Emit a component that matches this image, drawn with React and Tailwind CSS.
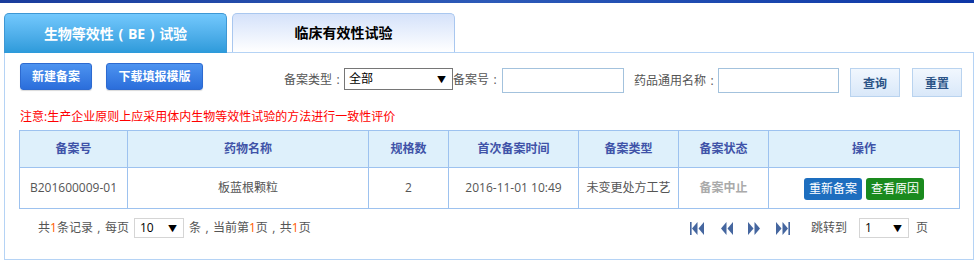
import React from "react";

const F = { fontFamily: '"Open Sans", "Noto Sans CJK SC", sans-serif' };

function P({ c, align = "text-center" }) {
  return <span className={`inline-block w-[1em] ${align}`}>{c}</span>;
}

function Sel({ value, w, h, border, pad = "pl-[4px]" }) {
  return (
    <div className={`flex items-center justify-between bg-white ${w} ${h} ${border} ${pad} pr-[6px] text-[12px] text-black`}>
      <span>{value}</span>
      <span className="text-[9px] leading-none">▼</span>
    </div>
  );
}

function NavIcon({ dir, bar }) {
  return (
    <svg width="15" height="13" viewBox="0 0 15 13" className="block">
      {dir === "left" ? (
        <g fill="#45669f">
          {bar && <rect x="0" y="0" width="1.6" height="13" />}
          <polygon points="7.5,0 2,6.5 7.5,13" />
          <polygon points="14,0 8.5,6.5 14,13" />
        </g>
      ) : (
        <g fill="#45669f">
          <polygon points="1,0 6.5,6.5 1,13" />
          <polygon points="7.5,0 13,6.5 7.5,13" />
          {bar && <rect x="13.4" y="0" width="1.6" height="13" />}
        </g>
      )}
    </svg>
  );
}

export default function App() {
  const cols = [108, 241, 80, 130, 100, 90, 191];
  const heads = ["备案号", "药物名称", "规格数", "首次备案时间", "备案类型", "备案状态", "操作"];
  return (
    <div className="w-[979px] h-[268px] bg-white overflow-hidden text-[12px]" style={F}>
      <div className="h-[3px] w-[974px] bg-gradient-to-r from-[#1a3c9c] via-[#2d5ab8] to-[#0d36a6]" />
      <div className="flex gap-[5px] pl-[4px] mt-[10px] h-[39px] relative z-10">
        <div className="w-[223px] h-[40px] rounded-t-[5px] border border-[#3d97d4] border-b-0 bg-gradient-to-b from-[#72c8fd] to-[#2c9ada] flex items-center justify-center text-white font-bold text-[14px] leading-none whitespace-nowrap">
          <span>生物等效性</span>
          <P c="(" />
          <span>BE</span>
          <P c=")" />
          <span>试验</span>
        </div>
        <div className="w-[223px] h-[39px] rounded-t-[5px] border border-[#a9c7ef] border-b-0 bg-gradient-to-b from-[#d5e2fa] to-white flex items-center justify-center text-black font-bold text-[14px] leading-none">
          临床有效性试验
        </div>
      </div>
      <div className="ml-[4px] w-[970px] h-[208px] border border-[#b5d3f5]">
        <div className="flex items-start pt-[10px] pl-[15px]">
          <div className="w-[72px] h-[27px] rounded-[3px] border border-[#2d6ad0] bg-gradient-to-b from-[#4d93f0] to-[#2b6edb] text-white font-bold flex items-center justify-center shadow-[0_1px_1px_rgba(0,0,0,0.15)]">
            新建备案
          </div>
          <div className="ml-[14px] w-[97px] h-[27px] rounded-[3px] border border-[#2d6ad0] bg-gradient-to-b from-[#4d93f0] to-[#2b6edb] text-white font-bold flex items-center justify-center shadow-[0_1px_1px_rgba(0,0,0,0.15)]">
            下载填报模版
          </div>
          <div className="ml-[81px] mt-[5px] flex items-start text-[#555]">
            <div className="w-[60px] h-[23px] flex items-center whitespace-nowrap">
              备案类型<P c=":" />
            </div>
            <Sel value="全部" w="w-[109px]" h="h-[22px]" border="border border-[#767676]" />
            <div className="w-[49px] h-[23px] flex items-center whitespace-nowrap">
              备案号<P c=":" />
            </div>
            <div className="w-[122px] h-[25px] border border-[#a3c2dd] bg-white" />
            <div className="ml-[10px] w-[84px] h-[25px] flex items-center whitespace-nowrap">
              药品通用名称<P c=":" />
            </div>
            <div className="w-[121px] h-[25px] border border-[#a3c2dd] bg-white" />
            <div className="ml-[11px] w-[50px] h-[29px] border border-[#b9d3ef] bg-gradient-to-b from-[#f1f7fe] to-[#d9e8f9] flex items-center justify-center font-bold text-[#2b5487] pt-[3px]">
              查询
            </div>
            <div className="ml-[12px] w-[50px] h-[29px] border border-[#b9d3ef] bg-gradient-to-b from-[#f1f7fe] to-[#d9e8f9] flex items-center justify-center font-bold text-[#2b5487] pt-[3px]">
              重置
            </div>
          </div>
        </div>
        <div className="mt-[12px] pl-[15px] h-[16px] leading-[16px] text-[#ff0000]">
          注意:生产企业原则上应采用体内生物等效性试验的方法进行一致性评价
        </div>
        <table className="ml-[14px] mt-[5px] w-[940px] border-collapse table-fixed">
          <colgroup>
            {cols.map((c, i) => (
              <col key={i} style={{ width: c }} />
            ))}
          </colgroup>
          <thead>
            <tr className="h-[37px] bg-[#def0fb]">
              {heads.map((h) => (
                <th key={h} className="border border-[#9dc2ef] font-bold text-[#4053a8] text-center p-0">
                  {h}
                </th>
              ))}
            </tr>
          </thead>
          <tbody>
            <tr className="h-[41px] text-[#555] text-center">
              <td className="border border-[#9dc2ef] p-0">B201600009-01</td>
              <td className="border border-[#9dc2ef] p-0">板蓝根颗粒</td>
              <td className="border border-[#9dc2ef] p-0">2</td>
              <td className="border border-[#9dc2ef] p-0">2016-11-01 10:49</td>
              <td className="border border-[#9dc2ef] p-0">未变更处方工艺</td>
              <td className="border border-[#9dc2ef] p-0 text-[#aaa] font-bold">备案中止</td>
              <td className="border border-[#9dc2ef] p-0">
                <div className="flex items-center justify-center gap-[4px] pt-[1px]">
                  <span className="w-[58px] h-[22px] rounded-[3px] bg-[#1d6ebf] text-white flex items-center justify-center">重新备案</span>
                  <span className="w-[58px] h-[22px] rounded-[3px] bg-[#1a8a1e] text-white flex items-center justify-center">查看原因</span>
                </div>
              </td>
            </tr>
          </tbody>
        </table>
        <div className="mt-[9px] flex items-center h-[20px] text-[#555] pl-[33px] pr-[45px] whitespace-nowrap">
          <span>
            共<span className="text-[#ff5a00]">1</span>条记录<P c="," />每页
          </span>
          <div className="ml-[5px]">
            <Sel value="10" w="w-[50px]" h="h-[20px]" border="border border-[#d5d5d5]" pad="pl-[5px]" />
          </div>
          <span className="ml-[5px]">
            条<P c="," />当前第<span className="text-[#ff5a00]">1</span>页<P c="," />共<span className="text-[#ff5a00]">1</span>页
          </span>
          <div className="ml-auto flex items-center">
            <NavIcon dir="left" bar />
            <div className="ml-[14px]"><NavIcon dir="left" /></div>
            <div className="ml-[13px]"><NavIcon dir="right" /></div>
            <div className="ml-[13px]"><NavIcon dir="right" bar /></div>
            <span className="ml-[21px]">跳转到</span>
            <div className="ml-[12px]">
              <Sel value="1" w="w-[50px]" h="h-[20px]" border="border border-[#d5d5d5]" pad="pl-[5px]" />
            </div>
            <span className="ml-[7px]">页</span>
          </div>
        </div>
      </div>
    </div>
  );
}
